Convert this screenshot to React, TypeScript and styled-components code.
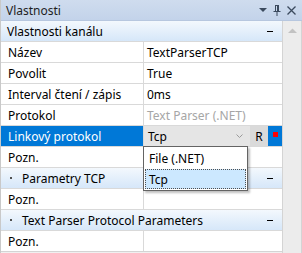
import React from "react"
import styled, { createGlobalStyle, css } from "styled-components"

const GlobalStyle = createGlobalStyle`
  html, body {
    margin: 0;
    padding: 0;
    background: #ffffff;
  }
  body {
    font-family: "Noto Sans", "Open Sans", sans-serif;
    font-size: 12px;
    color: #000000;
  }
`

const Panel = styled.div`
  width: 302px;
  height: 253px;
  box-sizing: border-box;
  border-left: 1px solid #c9c9c9;
  display: flex;
  flex-direction: column;
  background: #f0f0f0;
  overflow: hidden;
`

const TitleBar = styled.div`
  height: 21px;
  flex: none;
  display: flex;
  align-items: center;
  padding: 0 6px 0 5px;
  background: linear-gradient(#cfdcee, #c3d3ea);
  border-bottom: 1px solid #b7c7df;
  box-sizing: border-box;
`

const Title = styled.span`
  flex: 1;
  color: #1e1e1e;
`

const TitleIcons = styled.div`
  display: flex;
  align-items: center;
  gap: 6px;
`

const Body = styled.div`
  flex: 1;
  display: flex;
  min-height: 0;
`

const Grid = styled.div`
  position: relative;
  width: 281px;
  flex: none;
  display: flex;
  flex-direction: column;
  background: #f0f0f0;
  border-right: 1px solid #d4d4d4;
`

const Rows = styled.div`
  background: #ffffff;
  border-bottom: 1px solid #d4d4d4;
`

const Row = styled.div`
  display: flex;
  height: 21px;
  box-sizing: border-box;
  border-bottom: 1px solid #d9d9d9;
  &:last-child {
    border-bottom: none;
    height: 20px;
  }
`

const Label = styled.div<{ $selected?: boolean }>`
  width: 143px;
  flex: none;
  box-sizing: border-box;
  border-right: 1px solid #d9d9d9;
  padding-left: 7px;
  display: flex;
  align-items: center;
  white-space: nowrap;
  overflow: hidden;
  ${({ $selected }) => $selected && css`
    background: #0078d7;
    color: #ffffff;
  `}
`

const Value = styled.div<{ $disabled?: boolean }>`
  flex: 1;
  padding-left: 3px;
  display: flex;
  align-items: center;
  white-space: nowrap;
  overflow: hidden;
  color: ${({ $disabled }) => ($disabled ? "#a6a6a6" : "#000000")};
`

const Category = styled.div<{ $nested?: boolean }>`
  display: flex;
  align-items: center;
  height: 21px;
  box-sizing: border-box;
  border-bottom: 1px solid #d9d9d9;
  padding-left: ${({ $nested }) => ($nested ? "9px" : "6px")};
  padding-right: 9px;
  background: linear-gradient(#f3f8fd, #d6e7f9);
  white-space: nowrap;
`

const CategoryText = styled.span`
  flex: 1;
`

const Bullet = styled.span`
  width: 2px;
  height: 2px;
  background: #505050;
  margin-right: 10px;
`

const Collapse = styled.span`
  width: 6px;
  height: 1px;
  background: #000000;
`

const EditCell = styled.div`
  flex: 1;
  display: flex;
  align-items: stretch;
`

const Combo = styled.div`
  flex: 1;
  display: flex;
  align-items: center;
  justify-content: space-between;
  padding: 0 7px 0 4px;
  background: #e5e5e5;
`

const RButton = styled.div`
  width: 18px;
  display: flex;
  align-items: center;
  justify-content: center;
  background: #dadada;
`

const ColorButton = styled.div`
  width: 14px;
  display: flex;
  align-items: flex-start;
  justify-content: center;
  padding-top: 6px;
  box-sizing: border-box;
  background: #0078d7;
`

const RedMark = styled.span`
  width: 5px;
  height: 5px;
  background: #ff0000;
`

const DropDown = styled.div`
  position: absolute;
  left: 142px;
  top: 125px;
  width: 105px;
  box-sizing: border-box;
  border: 1px solid #646464;
  background: #ffffff;
  padding: 1px 1px 1px 1px;
  box-shadow: 2px 2px 2px rgba(0, 0, 0, 0.25);
`

const Option = styled.div<{ $active?: boolean }>`
  height: 20px;
  display: flex;
  align-items: center;
  padding-left: 4px;
  box-sizing: border-box;
  margin-bottom: 1px;
  ${({ $active }) => $active && css`
    background: #cce8ff;
    outline: 1px dotted #505050;
    outline-offset: -1px;
    margin-bottom: 0;
  `}
`

const Scrollbar = styled.div`
  flex: 1;
  display: flex;
  justify-content: center;
  padding-top: 7px;
  background: #ececec;
  border-right: 1px solid #d4d4d4;
`

const Filler = styled.div`
  flex: 1;
`

type Prop = { label: string; value?: string; disabled?: boolean }

const PropRow = ({ label, value = "", disabled }: Prop) => (
  <Row>
    <Label>{label}</Label>
    <Value $disabled={disabled}>{value}</Value>
  </Row>
)

const CategoryRow = ({ text, nested }: { text: string; nested?: boolean }) => (
  <Category $nested={nested}>
    {nested && <Bullet />}
    <CategoryText>{text}</CategoryText>
    <Collapse />
  </Category>
)

export default function App() {
  return (
    <>
      <GlobalStyle />
      <Panel>
        <TitleBar>
          <Title>Vlastnosti</Title>
          <TitleIcons>
            <svg width="8" height="5" viewBox="0 0 8 5">
              <path d="M0 0h8L4 4z" fill="#3b4a5e" />
            </svg>
            <svg width="8" height="11" viewBox="0 0 8 11">
              <path d="M2 0.5h4M2.5 1v5M5.5 1v5M4.5 1v5M0.5 6.5h7M4 7v4" stroke="#3b4a5e" fill="none" />
            </svg>
            <svg width="9" height="9" viewBox="0 0 9 9">
              <path d="M0.5 0.5l8 8M8.5 0.5l-8 8" stroke="#3b4a5e" strokeWidth="1.3" />
            </svg>
          </TitleIcons>
        </TitleBar>
        <Body>
          <Grid>
            <Rows>
              <CategoryRow text="Vlastnosti kanálu" />
              <PropRow label="Název" value="TextParserTCP" />
              <PropRow label="Povolit" value="True" />
              <PropRow label="Interval čtení / zápis" value="0ms" />
              <PropRow label="Protokol" value="Text Parser (.NET)" disabled />
              <Row>
                <Label $selected>Linkový protokol</Label>
                <EditCell>
                  <Combo>
                    <span>Tcp</span>
                    <svg width="7" height="4" viewBox="0 0 7 4">
                      <path d="M0.5 0.5l3 3 3-3" stroke="#9a9a9a" fill="none" />
                    </svg>
                  </Combo>
                  <RButton>R</RButton>
                  <ColorButton>
                    <RedMark />
                  </ColorButton>
                </EditCell>
              </Row>
              <PropRow label="Pozn." />
              <CategoryRow text="Parametry TCP" nested />
              <PropRow label="Pozn." />
              <CategoryRow text="Text Parser Protocol Parameters" nested />
              <PropRow label="Pozn." />
            </Rows>
            <Filler />
            <DropDown>
              <Option>File (.NET)</Option>
              <Option $active>Tcp</Option>
            </DropDown>
          </Grid>
          <Scrollbar>
            <svg width="9" height="5" viewBox="0 0 9 5">
              <path d="M0 5L4.5 0.5 9 5z" fill="#c2c2c2" />
            </svg>
          </Scrollbar>
        </Body>
      </Panel>
    </>
  )
}
